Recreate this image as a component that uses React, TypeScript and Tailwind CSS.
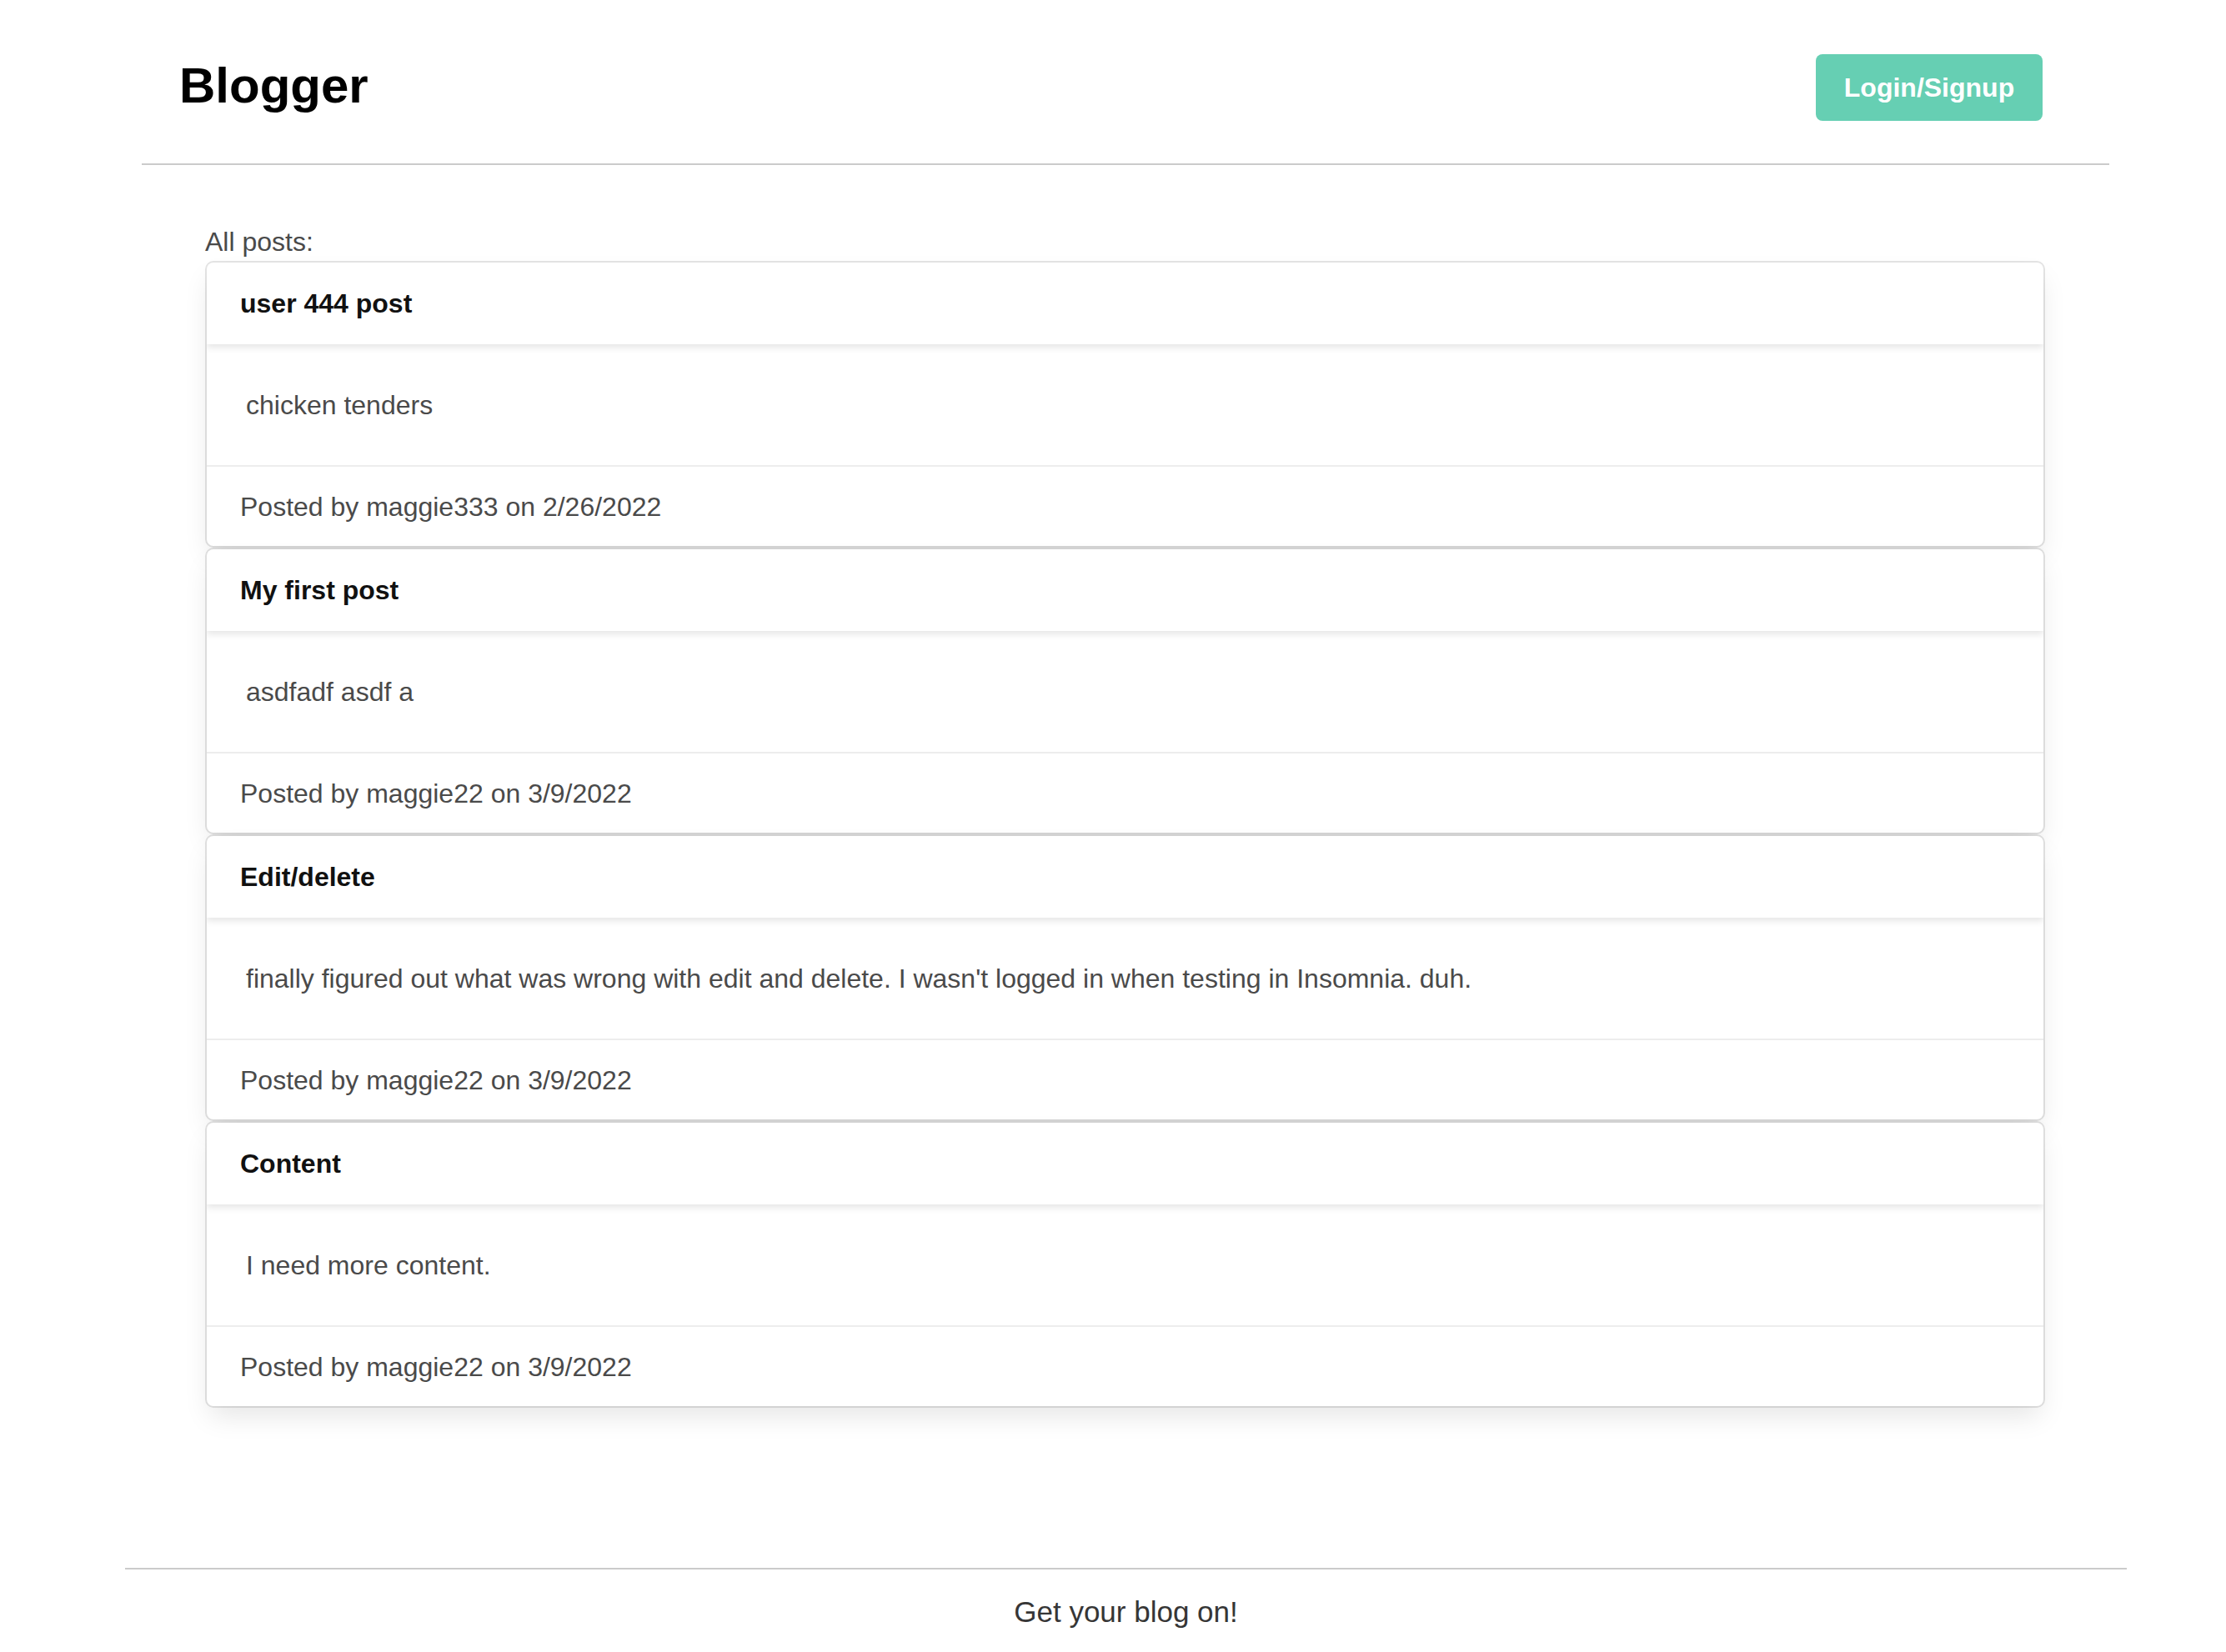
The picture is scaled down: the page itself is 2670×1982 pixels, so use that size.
import React from "react";

const posts = [
  { title: "user 444 post", body: "chicken tenders", author: "maggie333", date: "2/26/2022" },
  { title: "My first post", body: "asdfadf asdf a", author: "maggie22", date: "3/9/2022" },
  {
    title: "Edit/delete",
    body: "finally figured out what was wrong with edit and delete. I wasn't logged in when testing in Insomnia. duh.",
    author: "maggie22",
    date: "3/9/2022",
  },
  { title: "Content", body: "I need more content.", author: "maggie22", date: "3/9/2022" },
];

export default function App() {
  return (
    <div
      className="min-h-[1982px] w-full bg-white"
      style={{ fontFamily: '"Liberation Sans", Arial, Helvetica, sans-serif' }}
    >
      {/* Header */}
      <header className="ml-[170px] w-[2360px]">
        <div className="flex h-[196px] items-center justify-between pl-[45px] pr-[80px] pt-[10px]">
          <h1 className="text-[60px] font-bold leading-none text-black">Blogger</h1>
          <button className="mt-[4px] flex h-[80px] w-[272px] items-center justify-center rounded-[8px] bg-[#66cfb3] text-[32px] font-bold text-white">
            Login/Signup
          </button>
        </div>
        <div className="h-[2px] w-full bg-[#cbcbcb]" />
      </header>

      {/* Main */}
      <main className="ml-[248px] w-[2203px] pt-[68px]">
        <p className="-ml-[2px] text-[32px] leading-[48px] text-[#4a4a4a]">All posts:</p>
        <div className="mt-[1px] flex flex-col gap-[4px]">
          {posts.map((p, i) => (
            <div
              key={i}
              className="flex flex-col overflow-hidden rounded-[8px] bg-white shadow-[0_0_0_2px_rgba(10,10,10,0.11),0_16px_32px_-4px_rgba(10,10,10,0.1)]"
            >
              <div className="relative z-10 flex h-[98px] items-center pl-[40px] shadow-[0_4px_8px_rgba(10,10,10,0.1)]">
                <span className="text-[32px] font-bold text-[#111111]">{p.title}</span>
              </div>
              <div className="flex h-[145px] items-center pl-[47px]">
                <span className="text-[32px] text-[#4a4a4a]">{p.body}</span>
              </div>
              <div className="flex h-[97px] items-center border-t-2 border-[#ededed] pl-[40px]">
                <span className="text-[32px] text-[#4a4a4a]">
                  Posted by {p.author} on {p.date}
                </span>
              </div>
            </div>
          ))}
        </div>
      </main>

      {/* Footer */}
      <footer className="ml-[150px] mt-[194px] w-[2401px]">
        <div className="h-[2px] w-full bg-[#cbcbcb]" />
        <p className="pt-[25px] text-center text-[35px] text-[#363636]">Get your blog on!</p>
      </footer>
    </div>
  );
}
